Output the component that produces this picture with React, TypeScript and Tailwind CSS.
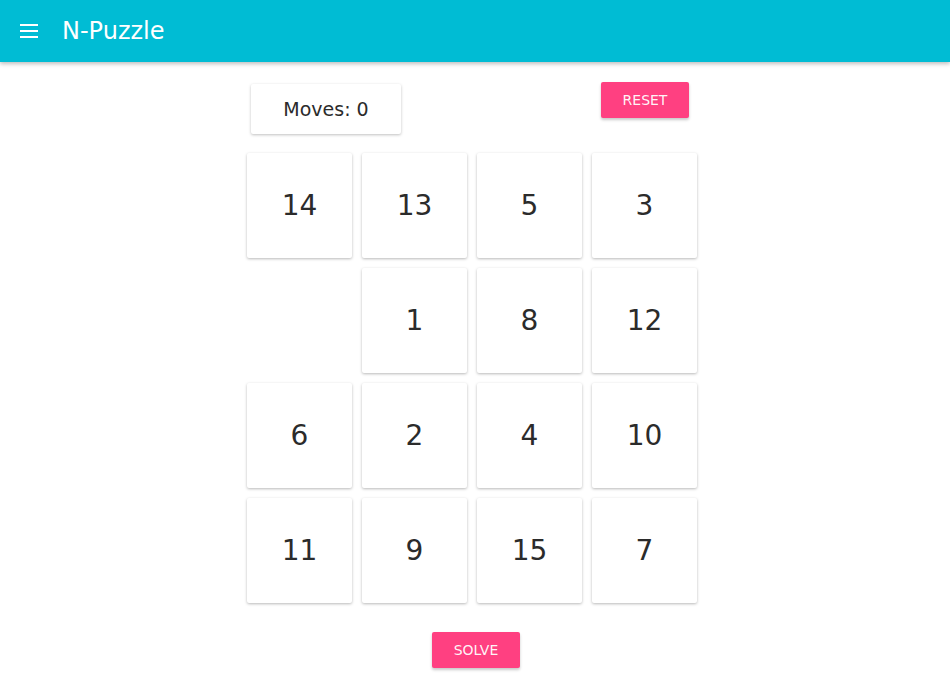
const tiles: (number | null)[] = [14, 13, 5, 3, null, 1, 8, 12, 6, 2, 4, 10, 11, 9, 15, 7];

export default function App() {
  return (
    <div className="min-h-[696px] w-full bg-white font-['DejaVu_Sans',sans-serif] text-[#212121]">
      {/* Barra superior */}
      <header className="relative z-10 flex h-[62px] items-center bg-[#00bcd4] pl-[20px] shadow-[0_2px_4px_rgba(0,0,0,0.25)]">
        <svg viewBox="0 0 18 14" className="h-[14px] w-[18px] fill-white">
          <rect x="0" y="0" width="18" height="2" />
          <rect x="0" y="6" width="18" height="2" />
          <rect x="0" y="12" width="18" height="2" />
        </svg>
        <h1 className="ml-[24px] text-[24px] leading-none text-white">N-Puzzle</h1>
      </header>

      {/* Tablero */}
      <div className="flex justify-center pr-[6px]">
        <div className="flex w-[460px] flex-col">
          <div className="flex items-start">
            <div className="ml-[9px] mt-[22px] flex h-[50px] w-[150px] items-center justify-center rounded-[2px] bg-white text-[19px] text-[#2b2b2b] shadow-[0_1px_3px_rgba(0,0,0,0.25)]">
              Moves: 0
            </div>
            <button className="ml-[200px] mt-[20px] h-[36px] w-[88px] rounded-[2px] bg-[#ff4081] text-[14px] text-white/95 shadow-[0_2px_3px_rgba(0,0,0,0.22)]">
              RESET
            </button>
          </div>
          <div className="mt-[14px] grid grid-cols-4">
            {tiles.map((n, i) => (
              <div key={i} className="p-[5px]">
                {n !== null ? (
                  <div className="flex h-[105px] w-[105px] items-center justify-center rounded-[2px] bg-white pt-[1px] text-[28px] text-[#2b2b2b] shadow-[0_1px_3px_rgba(0,0,0,0.28)]">
                    {n}
                  </div>
                ) : (
                  <div className="h-[105px] w-[105px]" />
                )}
              </div>
            ))}
          </div>
          <div className="mt-[24px] flex justify-center pl-[8px]">
            <button className="h-[36px] w-[88px] rounded-[2px] bg-[#ff4081] text-[14px] text-white/95 shadow-[0_2px_3px_rgba(0,0,0,0.22)]">
              SOLVE
            </button>
          </div>
        </div>
      </div>
    </div>
  );
}
